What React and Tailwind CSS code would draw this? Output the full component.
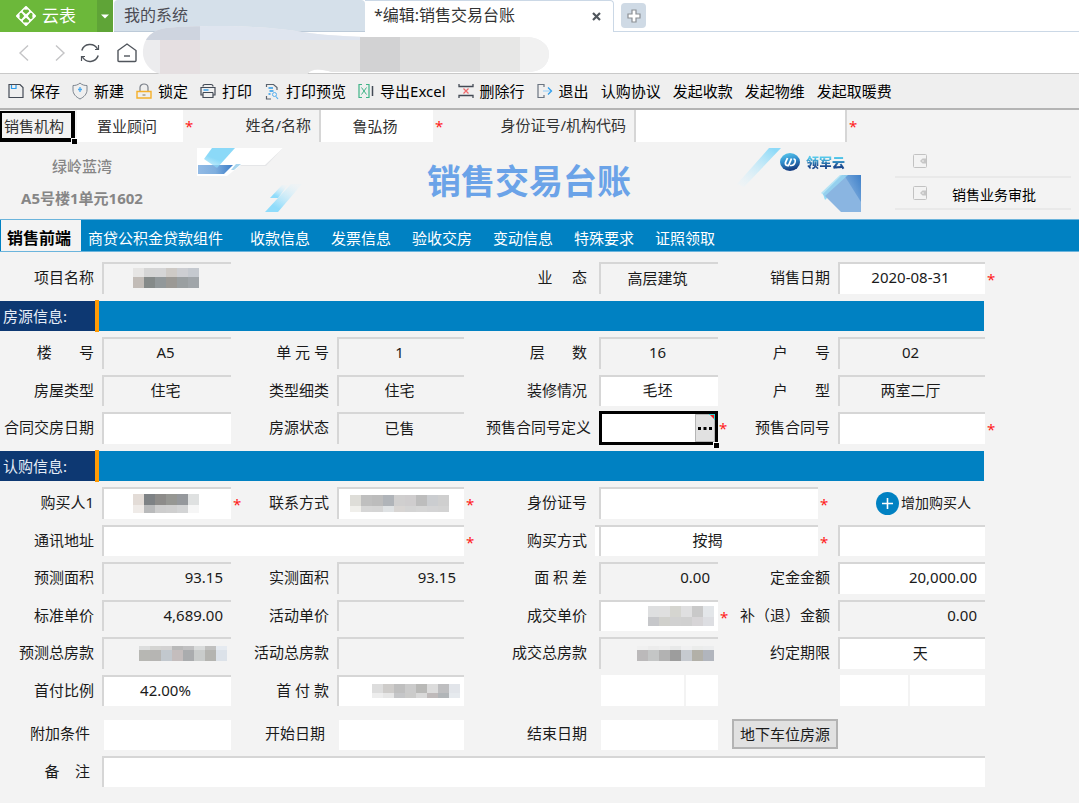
import { useState } from 'react';
import clsx from 'clsx';

const FORM_GRID =
  'grid grid-cols-[102fr_129fr_106fr_127fr_135fr_119fr_100fr_20fr_147fr_94fr] auto-rows-[32px_31px] gap-y-1.5';

const LABEL_COL = {
  1: 'col-start-1',
  2: 'col-start-3',
  3: 'col-start-5',
  4: 'col-start-7 col-span-2',
};

const FIELD_COL = {
  1: 'col-start-2',
  2: 'col-start-4',
  3: 'col-start-6',
  4: 'col-start-9',
  address: 'col-start-2 col-span-3',
  wide: 'col-start-6 col-span-2',
  full: 'col-start-2 col-span-8',
};

const ALIGN = {
  left: 'text-left',
  center: 'text-center',
  right: 'text-right',
};

function Star() {
  return <span className="absolute left-full top-0 h-full ml-0.5 flex items-center text-[#ff1a1a]">*</span>;
}

function Label({ at, htmlFor, pad, children }) {
  return (
    <label
      htmlFor={htmlFor}
      className={clsx(
        'min-w-0 flex items-center justify-end whitespace-pre pb-0.5',
        LABEL_COL[at],
        pad || (at === 3 ? 'pr-3' : 'pr-2')
      )}
    >
      {children}
    </label>
  );
}

function Field({ at, id, value = '', align = 'center', editable, required, plain, split, mosaic, ...rest }) {
  return (
    <div
      className={clsx(
        'relative min-w-0 border-l-2 border-t-2 bg-clip-padding',
        plain ? 'border-transparent' : 'border-[#d6d6d6]',
        editable && 'bg-white',
        FIELD_COL[at]
      )}
    >
      {split && <span className="absolute -top-0.5 bottom-0 right-full mr-0.5 w-1 border-t-2 border-[#d6d6d6] bg-white" />}
      {mosaic ? (
        <output
          id={id}
          className={clsx('flex h-full items-center pb-0.5', align === 'right' ? 'justify-end pr-1' : 'justify-center pr-1')}
        >
          <Mosaic rows={mosaic} />
        </output>
      ) : (
        <input
          id={id}
          defaultValue={value}
          readOnly={!editable}
          className={clsx('block w-full h-full pl-1 pr-2 pb-1 bg-transparent outline-none', ALIGN[align])}
          {...rest}
        />
      )}
      {required && <Star />}
    </div>
  );
}

// every row is a height followed by the colours of its 11px cells
function Mosaic({ rows }) {
  const width = Math.max(...rows.map((r) => r.length - 1)) * 11;
  const height = rows.reduce((sum, r) => sum + r[0], 0);
  let y = 0;
  return (
    <svg width={width} height={height} aria-hidden="true" shapeRendering="crispEdges">
      {rows.map(([h, ...colors], i) => {
        const top = y;
        y += h;
        return colors.map((c, j) => <rect key={`${i}-${j}`} x={j * 11} y={top} width="11" height={h} fill={c} />);
      })}
    </svg>
  );
}

const MOSAICS = {
  project: [
    [9, '#e6e5e4', '#d5d5d5', '#d5d5d6', '#cecac6', '#cdced2', '#c5c9cf'],
    [11, '#c2bcb7', '#858a89', '#92989a', '#9b9995', '#9a9fa1', '#a0a5a9'],
  ],
  buyer: [
    [11, '#e3dcd7', '#7e8285', '#8d8c8a', '#969793', '#95989c', '#dfe1e1'],
    [8, '#efebe8', '#b9babb', '#cdcdcd', '#cfcfcf', '#d3d4d5', '#f6f6f6'],
  ],
  phone: [
    [11, '#deddd8', '#bfbfbf', '#bcbcbc', '#b0b4b9', '#d0cfcf', '#cfcdce', '#bdbdbd', '#cbcdd0', '#cfcfcf'],
    [6, '#f0efeb', '#d6d6d6', '#d5d5d5', '#dfe2e4', '#d8d5d3', '#d4d4d4', '#d6d6d6', '#d4d4d5', '#d3d3d3'],
  ],
  forecastTotal: [
    [4, '#dcdddd', '#d4d4d2', '#d3d2d2', '#b9b9b9', '#c0c0c1', '#d9dbdb', '#c0c0bf', '#e5eaf0'],
    [11, '#b7b7b3', '#b6b5b3', '#c2c8ce', '#c4bdbd', '#aaacae', '#c9cccb', '#b4b4b0', '#dce2e9'],
  ],
  downPayment: [
    [9, '#dddddd', '#ceccca', '#bfbfbf', '#cbcbcb', '#b9b9b7', '#dcdcdc', '#bebec0', '#e2e5ea'],
    [5, '#ededed', '#e6e6e6', '#c5c6c8', '#cbcbca', '#d9d9d9', '#bfbaba', '#b1b5b8', '#e6eaee'],
  ],
  dealPrice: [
    [11, '#dedfe0', '#dfdfdf', '#d5d5d0', '#dfdfe0', '#c9c9c9', '#e3e6e9'],
    [9, '#c6c7ca', '#d0d0cc', '#d1d1d1', '#d0d0d0', '#d7d5d7', '#dddee2'],
  ],
  dealTotal: [
    [4, '#f0f0f0', '#ececec', '#eeeeee', '#e8e9e9', '#f0f0f1', '#ebeceb', '#ecedee'],
    [11, '#bbb9ba', '#c4c6c6', '#b2b2b2', '#9d9d9d', '#c6cad0', '#b2b0a8', '#b1b5bd'],
  ],
};

/* ---------- icons ---------- */

function CloudTableLogo() {
  return (
    <svg width="20" height="20" viewBox="0 0 20 20" fill="none" aria-hidden="true">
      <path d="M10 1 19 10 10 19 1 10z" fill="#fff" stroke="#fff" strokeWidth="2" strokeLinejoin="round" />
      <g fill="#6cb83a">
        <path d="M10 8.200 6.800 5.600Q7.200 2.500 10 3.800 12.800 2.500 13.200 5.600z" />
        <path d="M10 11.800 6.800 14.400Q7.200 17.500 10 16.200 12.800 17.500 13.200 14.400z" />
        <path d="M8.200 10 5.600 6.800Q2.500 7.200 3.800 10 2.500 12.800 5.600 13.200z" />
        <path d="M11.800 10 14.400 6.800Q17.500 7.200 16.200 10 17.500 12.800 14.400 13.200z" />
      </g>
    </svg>
  );
}

function SaveIcon() {
  return (
    <svg width="16" height="16" viewBox="0 0 16 16" fill="none" aria-hidden="true">
      <path d="M1 1.500H12L15 4.500V14.500H1z" stroke="#434a55" strokeWidth="1.200" />
      <path d="M3.500 2V5.500H8V2" stroke="#2b9bea" strokeWidth="1.200" />
    </svg>
  );
}

function NewIcon() {
  return (
    <svg width="16" height="18" viewBox="0 0 16 18" fill="none" aria-hidden="true">
      <path d="M8 1C6 3 3.500 3.500 1 3.500V8c0 4 3 7 7 9 4-2 7-5 7-9V3.500C12.500 3.500 10 3 8 1z" stroke="#7d858f" />
      <path d="M8 5v5M6 7.500h4" stroke="#4aa9ee" strokeWidth="1.300" />
    </svg>
  );
}

function LockIcon() {
  return (
    <svg width="16" height="16" viewBox="0 0 16 16" fill="none" aria-hidden="true">
      <path d="M4 8V4.500a4 3.500 0 0 1 8 0V8" stroke="#7b8089" strokeWidth="1.200" />
      <path d="M1 8.500H15V15H1z" stroke="#f5b02a" strokeWidth="1.400" />
      <path d="M6.500 12h3" stroke="#8a7a55" />
    </svg>
  );
}

function PrintIcon() {
  return (
    <svg width="16" height="16" viewBox="0 0 16 16" fill="none" stroke="#434a55" strokeWidth="1.200" aria-hidden="true">
      <path d="M3 3.500Q3 1.500 5 1.500H11Q13 1.500 13 3.500" />
      <path d="M3 12H1V4.500H15V12H13" />
      <path d="M3 9.500H13M3 9.500V14.500H13V9.500" />
      <path d="M3.500 7h5" stroke="#2b9bea" strokeWidth="1.400" />
    </svg>
  );
}

function PreviewIcon() {
  return (
    <svg width="16" height="17" viewBox="0 0 16 17" fill="none" aria-hidden="true">
      <path d="M2.500 4V1.500H9.500L13 4.500V7M2.500 13V16H7" stroke="#59616c" strokeWidth="1.200" />
      <path d="M4.500 5h4.500M5.500 8h4M4.500 11h2" stroke="#2b9bea" strokeWidth="1.300" />
      <circle cx="10.500" cy="11.500" r="2" stroke="#57b0f0" />
      <path d="M12 13.500 14 16" stroke="#57b0f0" strokeWidth="1.200" />
    </svg>
  );
}

function ExcelIcon() {
  return (
    <svg width="16" height="16" viewBox="0 0 16 16" fill="none" aria-hidden="true">
      <path d="M4 1.500H1V14.500H4M8 1.500H11V14.500H8" stroke="#3fb487" strokeWidth="1.200" />
      <path d="M3.500 4.500 8.500 11.500M8.500 4.500 3.500 11.500" stroke="#3fb487" />
      <path d="M14.500 3v10" stroke="#434a55" strokeWidth="1.500" />
    </svg>
  );
}

function DeleteRowIcon() {
  return (
    <svg width="16" height="16" viewBox="0 0 16 16" fill="none" aria-hidden="true">
      <path d="M1 1V3.500H15V1M1 15V12.500H15V15" stroke="#434a55" strokeWidth="1.300" />
      <path d="M5.500 5.500 10.500 10.500M10.500 5.500 5.500 10.500" stroke="#f0686a" strokeWidth="1.200" />
    </svg>
  );
}

function ExitIcon() {
  return (
    <svg width="16" height="16" viewBox="0 0 16 16" fill="none" aria-hidden="true">
      <path d="M7 4V1.500H1V14.500H7V12" stroke="#6b7480" strokeWidth="1.200" />
      <path d="M6 8h8" stroke="#9fd2f6" strokeWidth="1.200" />
      <path d="M11 4.500 14.500 8 11 11.500" stroke="#2f9eec" strokeWidth="1.300" />
    </svg>
  );
}

function ApprovalIcon() {
  return (
    <svg width="14" height="14" viewBox="0 0 14 14" fill="none" aria-hidden="true">
      <rect x="0.500" y="0.500" width="13" height="13" rx="1" stroke="#c2c2c2" />
      <path d="M13 4.500H9.500L7 7 9.500 9.500H13z" fill="#c6c6c6" />
      <circle cx="10" cy="7" r="0.800" fill="#f3f3f3" />
    </svg>
  );
}

/* ---------- browser frame ---------- */

function TabStrip() {
  return (
    <div className="flex h-8 text-base leading-8">
      <button type="button" className="flex w-[97px] items-center gap-1.5 bg-[#6cb83a] pl-4 text-[17px] text-white">
        <CloudTableLogo />
        云表
      </button>
      <button type="button" aria-label="菜单" className="grid w-4 place-items-center bg-[#5fa437]">
        <svg width="8" height="5" viewBox="0 0 8 5" aria-hidden="true">
          <path d="M0 0.500H8L4 4.500z" fill="#fff" />
        </svg>
      </button>
      <a href="#system" className="ml-px w-[251px] rounded-t border-b border-[#bccad8] bg-[#d5e0ea] pl-2.5 text-[#4c4c54]">
        <span className="block -mt-px">我的系统</span>
      </a>
      <div className="flex w-[249px] items-center justify-between rounded-tr border-r border-t border-[#cbd8e6] pl-[9px] pr-3 text-[#333]">
        <span className="pb-1">*编辑:销售交易台账</span>
        <button type="button" aria-label="关闭">
          <svg width="9" height="9" viewBox="0 0 9 9" aria-hidden="true">
            <path d="M1 1 8 8M8 1 1 8" stroke="#4f555c" strokeWidth="2.200" />
          </svg>
        </button>
      </div>
      <div className="flex-1 border-b border-[#cbd8e6] pl-[7px] pt-[3px]">
        <button type="button" aria-label="新标签页" className="grid size-[25px] place-items-center rounded bg-[#cfdae5]">
          <svg width="14" height="14" viewBox="0 0 14 14" aria-hidden="true">
            <path d="M5 1H9V5H13V9H9V13H5V9H1V5H5z" fill="#fff" stroke="#8b8f94" strokeWidth="1.200" />
          </svg>
        </button>
      </div>
    </div>
  );
}

function AddressBlur() {
  return (
    <svg className="absolute left-[142px] -top-1.5" width="408" height="48" viewBox="0 0 408 48" aria-hidden="true">
      <defs>
        <clipPath id="blob">
          <path d="M18 48C6 44 0 34 1 24 2 12 10 4 24 2 60-1 120-1 160 6 200 12 240 11 280 11H386C400 12 407 20 407 28 407 38 400 45 388 46H190C180 44 172 41 165 48z" />
        </clipPath>
      </defs>
      <g clipPath="url(#blob)">
        <rect width="408" height="48" fill="#ececee" />
        <rect width="58" height="14" fill="#ced4df" />
        <rect x="58" width="160" height="14" fill="#dfe5ef" />
        <rect x="18" y="14" width="40" height="34" fill="#e5dfe1" />
        <rect x="58" y="14" width="90" height="34" fill="#e5e4e4" />
        <rect x="148" y="14" width="70" height="34" fill="#e6e6e6" />
        <rect x="218" y="11" width="40" height="37" fill="#d2d2d3" />
        <rect x="258" y="11" width="80" height="37" fill="#dedede" />
        <rect x="338" y="11" width="40" height="37" fill="#e7e7e6" />
        <rect x="378" y="11" width="30" height="37" fill="#f1f1f1" />
      </g>
    </svg>
  );
}

function NavBar() {
  return (
    <div className="relative flex h-[42px] items-center border-b border-[#c9c9c9] pl-[18px]">
      <div className="flex items-center">
        <button type="button" aria-label="后退">
          <svg width="12" height="18" viewBox="0 0 12 18" fill="none" aria-hidden="true">
            <path d="M10 1.500 2 9 10 16.500" stroke="#c4c4c6" strokeWidth="1.400" />
          </svg>
        </button>
        <button type="button" aria-label="前进" className="ml-6">
          <svg width="12" height="18" viewBox="0 0 12 18" fill="none" aria-hidden="true">
            <path d="M2 1.500 10 9 2 16.500" stroke="#c4c4c6" strokeWidth="1.400" />
          </svg>
        </button>
        <button type="button" aria-label="刷新" className="ml-3.5">
          <svg width="20" height="20" viewBox="0 0 20 20" fill="none" stroke="#50555c" strokeWidth="1.500" aria-hidden="true">
            <path d="M1.800 7.500A8.600 8.600 0 0 1 17.500 6M18.200 12.500A8.600 8.600 0 0 1 2.500 14" />
            <path d="M18.500 2V6.500H15M1.500 18V13.500H5" strokeWidth="1.200" />
          </svg>
        </button>
        <button type="button" aria-label="主页" className="ml-[17px]">
          <svg width="20" height="20" viewBox="0 0 20 20" fill="none" stroke="#50555c" strokeWidth="1.400" aria-hidden="true">
            <path d="M1 7.500 10 1 19 7.500V17.500Q19 18.500 18 18.500H2Q1 18.500 1 17.500z" />
            <path d="M7 13h6" />
          </svg>
        </button>
      </div>
      <AddressBlur />
    </div>
  );
}

const TOOLS = [
  { label: '保存', icon: SaveIcon },
  { label: '新建', icon: NewIcon },
  { label: '锁定', icon: LockIcon },
  { label: '打印', icon: PrintIcon },
  { label: '打印预览', icon: PreviewIcon },
  { label: '导出Excel', icon: ExcelIcon },
  { label: '删除行', icon: DeleteRowIcon },
  { label: '退出', icon: ExitIcon },
  { label: '认购协议' },
  { label: '发起收款' },
  { label: '发起物维' },
  { label: '发起取暖费' },
];

function Toolbar() {
  return (
    <div className="flex h-9 items-center gap-3 border-b-2 border-[#b4b4b4] bg-[#efefef] px-2 text-black">
      {TOOLS.map((t) => (
        <button key={t.label} type="button" className="flex shrink-0 items-center gap-1.5 whitespace-nowrap">
          {t.icon && <t.icon />}
          {t.label}
        </button>
      ))}
    </div>
  );
}

/* ---------- document header ---------- */

function AgentRow() {
  return (
    <div className="grid h-8 grid-cols-[75fr_108fr_136fr_114fr_201fr_213fr_232fr]">
      <label
        htmlFor="agent"
        className="relative mt-px flex items-center border-2 border-b-4 border-r-4 border-black pl-0.5 whitespace-nowrap text-[#333]"
      >
        销售机构
        <span className="absolute -bottom-1.5 -right-1.5 size-1.5 border-l border-t border-white bg-black" />
      </label>
      <div className="relative ml-0.5 bg-white">
        <input id="agent" defaultValue="置业顾问" className="block h-full w-full pb-0.5 pr-1.5 text-center text-[#333] outline-none" />
        <span className="absolute left-full top-0 ml-0.5 flex h-full items-center text-[#ff1a1a]">*</span>
      </div>
      <label htmlFor="name" className="flex items-center justify-end pb-0.5 pr-2 text-[#333]">姓名/名称</label>
      <div className="relative border-l-2 border-[#d6d6d6] bg-white">
        <input id="name" defaultValue="鲁弘扬" className="block h-full w-full pb-0.5 pr-1 text-center text-[#333] outline-none" />
        <span className="absolute left-full top-0 ml-0.5 flex h-full items-center text-[#ff1a1a]">*</span>
      </div>
      <label htmlFor="code" className="flex items-center justify-end pb-0.5 pr-2 text-[#333]">身份证号/机构代码</label>
      <div className="relative border-x-2 border-[#d6d6d6] bg-white">
        <input id="code" className="block h-full w-full px-2 outline-none" />
        <span className="absolute left-full top-0 ml-1 flex h-full items-center text-[#ff1a1a]">*</span>
      </div>
    </div>
  );
}

function BannerLeftArt() {
  return (
    <svg width="106" height="65" viewBox="0 0 106 65" aria-hidden="true">
      <defs>
        <linearGradient id="skyLeft" x1="0" y1="1" x2="0.600" y2="0">
          <stop offset="0" stopColor="#8fdcf8" stopOpacity="0.300" />
          <stop offset="0.500" stopColor="#8bd9f8" />
        </linearGradient>
        <linearGradient id="blueLeft">
          <stop offset="0" stopColor="#92bae5" />
          <stop offset="0.500" stopColor="#7eaede" />
          <stop offset="1" stopColor="#3c7cc8" />
        </linearGradient>
        <linearGradient id="slashLeft" x1="0" y1="1" x2="0.800" y2="0">
          <stop offset="0.250" stopColor="#8fdcfb" />
          <stop offset="1" stopColor="#dff2fb" stopOpacity="0.200" />
        </linearGradient>
      </defs>
      <path d="M0 0H86L69 18H0z" fill="#e5e6e8" />
      <path d="M0 0H86L68 17H0z" fill="#fff" />
      <path d="M0 17H44L30 28H0z" fill="#fff" />
      <path d="M1 17H36L27 26H1z" fill="url(#blueLeft)" />
      <path d="M15 0H38L20 20 7 11z" fill="url(#skyLeft)" />
      <path d="M37 22 44 16H39L34 22z" fill="#a9d6ef" />
      <path d="M68 64H81L105 36H94z" fill="url(#slashLeft)" />
      <path d="M73 50H81L91 37H85z" fill="url(#slashLeft)" />
    </svg>
  );
}

function BannerRightArt() {
  return (
    <svg width="124" height="65" viewBox="0 0 124 65" aria-hidden="true">
      <defs>
        <linearGradient id="slashRight" x1="1" y1="0" x2="0.100" y2="1">
          <stop offset="0.100" stopColor="#8edaf8" />
          <stop offset="1" stopColor="#e8f4fa" stopOpacity="0.300" />
        </linearGradient>
        <linearGradient id="orb" x1="0" y1="0" x2="0.300" y2="1">
          <stop offset="0" stopColor="#5fd0ee" />
          <stop offset="0.500" stopColor="#3290cf" />
          <stop offset="1" stopColor="#173f83" />
        </linearGradient>
        <linearGradient id="gem" x1="0" y1="0.800" x2="1" y2="0">
          <stop offset="0" stopColor="#8fb9e4" />
          <stop offset="1" stopColor="#3f80c8" />
        </linearGradient>
      </defs>
      <path d="M32 0H44L7 39 0 36z" fill="url(#slashRight)" />
      <ellipse cx="53" cy="14" rx="10" ry="9" fill="url(#orb)" />
      <path d="M50.500 10 48.500 14.500Q48 17.500 50.500 17.500H51.500L54.500 10.500" fill="none" stroke="#fff" strokeWidth="1.800" />
      <path d="M53 17.500H54.500Q57 17.500 58 14.500 59 11 56.500 11" fill="none" stroke="#fff" strokeWidth="1.600" />
      <path d="M86 46 104 28H112L88 52z" fill="#92dbf6" />
      <path d="M86 46 105 27H124V64H104z" fill="#8ab5e1" />
      <path d="M107 27H124V54z" fill="url(#gem)" />
      <path d="M84 45 103 27H111L88 48z" fill="#9adcf4" fillOpacity="0.700" />
    </svg>
  );
}

function Banner() {
  return (
    <div className="grid h-[77px] grid-cols-[164fr_33fr_664fr_34fr_176fr_8fr]">
      <div className="flex flex-col items-center pt-2 leading-[32px] text-[#868686]">
        <p className="h-8 font-medium">绿岭蓝湾</p>
        <p className="whitespace-nowrap font-bold">A5号楼1单元1602</p>
      </div>
      <div className="col-start-3 flex items-start justify-between pt-1.5">
        <div className="w-[124px]">
          <BannerLeftArt />
        </div>
        <h1 className="whitespace-nowrap text-[34px] font-bold leading-[66px] text-[#6ba3e8]">销售交易台账</h1>
        <div className="relative">
          <BannerRightArt />
          <span className="absolute right-4 top-1 whitespace-nowrap bg-gradient-to-b from-[#56c8ea] from-30% to-[#1b4a8f] to-70% bg-clip-text text-[13px] font-black leading-5 text-transparent">
            领军云
          </span>
        </div>
      </div>
      <div className="col-start-5 pt-1">
        <div className="flex h-8 items-center border-b-2 border-[#e9e9e9] pl-[18px]">
          <ApprovalIcon />
        </div>
        <div className="flex h-8 items-center gap-[25px] border-b-2 border-[#e9e9e9] pl-[18px] text-sm text-black">
          <ApprovalIcon />
          <a href="#approval" className="whitespace-nowrap pt-1">销售业务审批</a>
        </div>
      </div>
    </div>
  );
}

const TABS = ['销售前端', '商贷公积金贷款组件', '收款信息', '发票信息', '验收交房', '变动信息', '特殊要求', '证照领取'];

function Tabs() {
  const [active, setActive] = useState(0);
  return (
    <nav className="flex h-[33px] gap-px border-y border-[#6bb4dc] bg-[#0081c2] pl-px">
      {TABS.map((t, i) => (
        <button
          key={t}
          type="button"
          onClick={() => setActive(i)}
          className={clsx(
            'whitespace-nowrap pt-1',
            i === 0 ? 'pl-1.5 pr-2.5' : i === 1 ? 'mr-2.5 px-1.5' : 'px-2.5',
            active === i ? 'bg-[#f3f3f3] text-base font-bold text-black' : 'text-white'
          )}
        >
          {t}
        </button>
      ))}
    </nav>
  );
}

/* ---------- form ---------- */

function SectionBand({ title }) {
  return (
    <div className="mb-1.5 mt-[7px] grid h-[30px] grid-cols-[95fr_4fr_885fr_95fr]">
      <h2 className="flex items-center bg-[#0d3872] pl-[3px] text-[#e6edf7]">{title}</h2>
      <div className="-my-px bg-[#ff9b05]" />
      <div className="bg-[#0081c2]" />
    </div>
  );
}

function ContractPicker() {
  return (
    <div className="relative col-start-6 -my-px flex min-w-0 border-[3px] border-black bg-white">
      <input id="presale-def" className="min-w-0 flex-1 px-2 outline-none" />
      <button type="button" aria-label="选择" className="grid w-5 place-items-center border border-[#b5b5b5] bg-[#e1e1e1]">
        <svg width="14" height="3" viewBox="0 0 14 3" aria-hidden="true">
          <path d="M0 0H3V3H0zM5.500 0H8.500V3H5.500zM11 0H14V3H11z" fill="#000" />
        </svg>
      </button>
      <svg className="absolute right-0 top-0" width="6" height="6" viewBox="0 0 6 6" aria-hidden="true">
        <path d="M0 0H6V6H5V1H0z" fill="#2fd5d5" />
        <path d="M1 1H5V5z" fill="#e22" />
      </svg>
      <span className="absolute -bottom-1.5 -right-1 size-1.5 border-l border-t border-white bg-black" />
      <span className="absolute left-full top-0 ml-1 flex h-full items-center text-[#ff1a1a]">*</span>
    </div>
  );
}

export default function App() {
  return (
    <div className="min-h-screen overflow-x-hidden bg-[#f3f3f3] font-['Noto_Sans','Noto_Sans_CJK_SC',sans-serif] text-[15px] leading-5 text-[#1a1a1a]">
      <header className="bg-white">
        <TabStrip />
        <NavBar />
        <Toolbar />
      </header>
      <AgentRow />
      <Banner />
      <Tabs />

      <main className="pt-2.5">
        <div className={FORM_GRID}>
          <Label at={1} htmlFor="project">项目名称</Label>
          <Field at={1} id="project" mosaic={MOSAICS.project} />
          <Label at={3} htmlFor="format">{'业     态'}</Label>
          <Field at={3} id="format" value="高层建筑" />
          <Label at={4} htmlFor="sale-date">销售日期</Label>
          <Field at={4} id="sale-date" value="2020-08-31" editable required />
        </div>

        <SectionBand title="房源信息:" />
        <div className={FORM_GRID}>
          <Label at={1} htmlFor="building">{'楼       号'}</Label>
          <Field at={1} id="building" value="A5" />
          <Label at={2} htmlFor="unit">{'单 元 号'}</Label>
          <Field at={2} id="unit" value="1" />
          <Label at={3} htmlFor="floor">{'层       数'}</Label>
          <Field at={3} id="floor" value="16" />
          <Label at={4} htmlFor="room">{'户       号'}</Label>
          <Field at={4} id="room" value="02" />

          <Label at={1} htmlFor="house-type">房屋类型</Label>
          <Field at={1} id="house-type" value="住宅" />
          <Label at={2} htmlFor="sub-type">类型细类</Label>
          <Field at={2} id="sub-type" value="住宅" />
          <Label at={3} htmlFor="decoration">装修情况</Label>
          <Field at={3} id="decoration" value="毛坯" editable />
          <Label at={4} htmlFor="layout">{'户       型'}</Label>
          <Field at={4} id="layout" value="两室二厅" />

          <Label at={1} htmlFor="handover">合同交房日期</Label>
          <Field at={1} id="handover" editable />
          <Label at={2} htmlFor="status">房源状态</Label>
          <Field at={2} id="status" value="已售" />
          <Label at={3} htmlFor="presale-def" pad="pr-2">预售合同号定义</Label>
          <ContractPicker />
          <Label at={4} htmlFor="presale">预售合同号</Label>
          <Field at={4} id="presale" editable required />
        </div>

        <SectionBand title="认购信息:" />
        <div className={FORM_GRID}>
          <Label at={1} htmlFor="buyer">购买人1</Label>
          <Field at={1} id="buyer" mosaic={MOSAICS.buyer} editable required />
          <Label at={2} htmlFor="phone">联系方式</Label>
          <Field at={2} id="phone" mosaic={MOSAICS.phone} editable required />
          <Label at={3} htmlFor="id-card">身份证号</Label>
          <Field at="wide" id="id-card" editable required />
          <button type="button" className="col-start-9 flex items-center justify-center gap-0.5 whitespace-nowrap pl-6 text-sm">
            <svg width="23" height="23" viewBox="0 0 23 23" aria-hidden="true">
              <circle cx="11.500" cy="11.500" r="11.500" fill="#0081c2" />
              <path d="M11.500 6V17M6 11.500H17" stroke="#fff" strokeWidth="1.600" />
            </svg>
            增加购买人
          </button>

          <Label at={1} htmlFor="address">通讯地址</Label>
          <Field at="address" id="address" align="left" editable required />
          <Label at={3} htmlFor="pay-mode">购买方式</Label>
          <Field at="wide" id="pay-mode" value="按揭" editable required split />
          <Field at={4} id="pay-extra" aria-label="购买方式说明" editable />

          <Label at={1} htmlFor="area">预测面积</Label>
          <Field at={1} id="area" value="93.15" align="right" />
          <Label at={2} htmlFor="real-area">实测面积</Label>
          <Field at={2} id="real-area" value="93.15" align="right" />
          <Label at={3} htmlFor="area-diff">{'面 积 差'}</Label>
          <Field at={3} id="area-diff" value="0.00" align="right" />
          <Label at={4} htmlFor="deposit">定金金额</Label>
          <Field at={4} id="deposit" value="20,000.00" align="right" editable />

          <Label at={1} htmlFor="std-price">标准单价</Label>
          <Field at={1} id="std-price" value="4,689.00" align="right" />
          <Label at={2} htmlFor="promo-price">活动单价</Label>
          <Field at={2} id="promo-price" align="right" />
          <Label at={3} htmlFor="deal-price">成交单价</Label>
          <Field at={3} id="deal-price" align="right" mosaic={MOSAICS.dealPrice} editable required />
          <Label at={4} htmlFor="refund">补（退）金额</Label>
          <Field at={4} id="refund" value="0.00" align="right" />

          <Label at={1} htmlFor="total">预测总房款</Label>
          <Field at={1} id="total" align="right" mosaic={MOSAICS.forecastTotal} />
          <Label at={2} htmlFor="promo-total">活动总房款</Label>
          <Field at={2} id="promo-total" align="right" />
          <Label at={3} htmlFor="deal-total">成交总房款</Label>
          <Field at={3} id="deal-total" align="right" mosaic={MOSAICS.dealTotal} />
          <Label at={4} htmlFor="term">约定期限</Label>
          <Field at={4} id="term" value="     天" editable />

          <Label at={1} htmlFor="ratio">首付比例</Label>
          <Field at={1} id="ratio" value="42.00%" editable />
          <Label at={2} htmlFor="down">{'首 付 款'}</Label>
          <Field at={2} id="down" align="right" mosaic={MOSAICS.downPayment} editable />
          <div className="col-start-6 ml-0.5 grid grid-cols-[82fr_32fr] gap-0.5">
            <input aria-label="贷款金额" className="min-w-0 bg-white px-2 outline-none" />
            <input aria-label="贷款年限" className="min-w-0 bg-white px-2 outline-none" />
          </div>
          <div className="col-start-9 ml-0.5 grid grid-cols-[68fr_74fr] gap-0.5">
            <input aria-label="期限起" className="min-w-0 bg-white px-2 outline-none" />
            <input aria-label="期限止" className="min-w-0 bg-white px-2 outline-none" />
          </div>
        </div>

        <div className={clsx(FORM_GRID, 'mt-3 pb-4')}>
          <Label at={1} htmlFor="terms" pad="pr-3">附加条件</Label>
          <Field at={1} id="terms" editable plain />
          <Label at={2} htmlFor="start" pad="pr-3">开始日期</Label>
          <Field at={2} id="start" editable plain />
          <Label at={3} htmlFor="end">结束日期</Label>
          <Field at={3} id="end" editable plain />
          <button
            type="button"
            className="col-start-7 col-span-2 my-px ml-3.5 whitespace-nowrap border-2 border-[#b3b3b3] bg-[#e1e1e1]"
          >
            地下车位房源
          </button>

          <Label at={1} htmlFor="remark" pad="pr-3">{'备    注'}</Label>
          <Field at="full" id="remark" align="left" editable />
        </div>
      </main>
    </div>
  );
}
